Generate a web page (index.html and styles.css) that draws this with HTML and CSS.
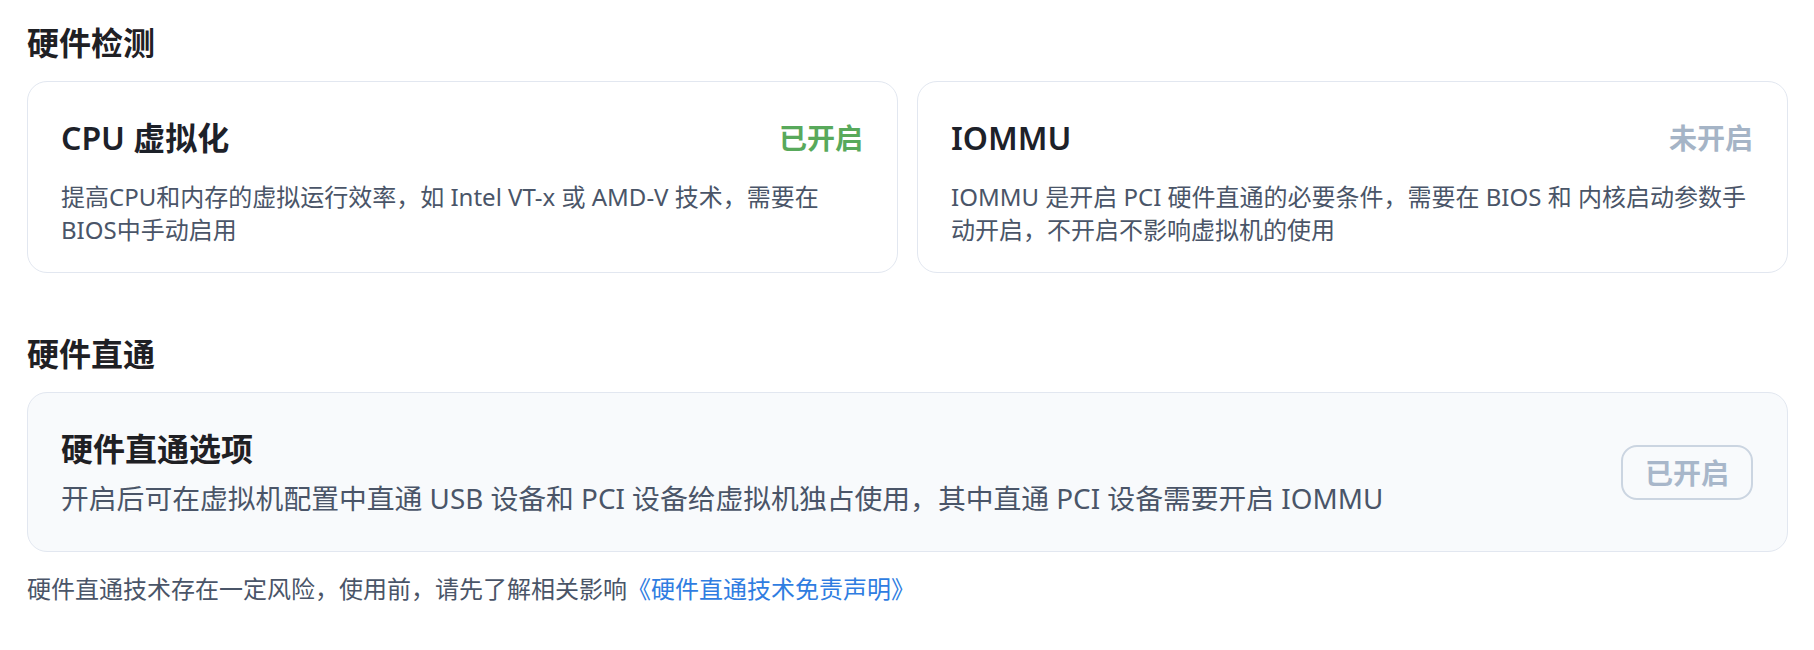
FILE: index.html
```html
<!DOCTYPE html>
<html lang="zh-CN">

<head>
    <meta charset="UTF-8">
    <meta name="viewport" content="width=device-width, initial-scale=1.0">
    <title>硬件</title>
    <link rel="stylesheet" href="styles.css">
</head>

<body>
    <section class="section">
        <h2 class="section-title">硬件检测</h2>
        <div class="check-grid">
            <div class="check-card">
                <div class="check-head">
                    <span class="check-name">CPU 虚拟化</span>
                    <span class="status status-on">已开启</span>
                </div>
                <p class="check-desc">提高CPU和内存的虚拟运行效率，如 Intel VT-x 或 AMD-V 技术，需要在BIOS中手动启用</p>
            </div>
            <div class="check-card">
                <div class="check-head">
                    <span class="check-name">IOMMU</span>
                    <span class="status status-off">未开启</span>
                </div>
                <p class="check-desc">IOMMU 是开启 PCI 硬件直通的必要条件，需要在 BIOS 和 内核启动参数手动开启，不开启不影响虚拟机的使用</p>
            </div>
        </div>
    </section>

    <section class="section section-pass">
        <h2 class="section-title">硬件直通</h2>
        <div class="option-card">
            <div class="option-text">
                <div class="option-name">硬件直通选项</div>
                <p class="option-desc">开启后可在虚拟机配置中直通 USB 设备和 PCI 设备给虚拟机独占使用，其中直通 PCI 设备需要开启 IOMMU</p>
            </div>
            <button class="option-button" disabled>已开启</button>
        </div>
        <p class="note">硬件直通技术存在一定风险，使用前，请先了解相关影响<a href="#" class="note-link">《硬件直通技术免责声明》</a></p>
    </section>
</body>

</html>
```

FILE: styles.css
```css
body {
    margin: 0;
    padding: 19px 26px 0 27px;
    font-family: "Noto Sans", "Noto Sans CJK SC", sans-serif;
    background-color: #ffffff;
    color: #1f2329;
}

.section-title {
    margin: 0 0 14px;
    font-size: 32px;
    line-height: 48px;
    font-weight: 700;
    color: #1f2024;
}

.section-pass {
    margin-top: 57px;
}

.check-grid {
    display: grid;
    grid-template-columns: 1fr 1fr;
    gap: 19px;
}

.check-card {
    border: 1px solid #e2e7f0;
    border-radius: 20px;
    padding: 32px 34px 26px 33px;
    background-color: #ffffff;
}

.check-head {
    display: flex;
    justify-content: space-between;
    align-items: center;
    margin-bottom: 18px;
}

.check-name {
    font-size: 32px;
    line-height: 48px;
    font-weight: 600;
    color: #1d2129;
}

.status {
    font-size: 28px;
    line-height: 48px;
    font-weight: 700;
}

.status-on {
    color: #58a95b;
}

.status-off {
    color: #a5b4c6;
}

.check-desc {
    margin: 0;
    font-size: 24px;
    line-height: 33px;
    color: #4a5568;
}

.option-card {
    display: flex;
    justify-content: space-between;
    align-items: center;
    border: 1px solid #e2e7f0;
    border-radius: 20px;
    padding: 32px 34px 32px 33px;
    background-color: #f8fafc;
}

.option-name {
    font-size: 32px;
    line-height: 48px;
    font-weight: 700;
    color: #1f2024;
}

.option-desc {
    margin: 4px 0 0;
    font-size: 27.8px;
    line-height: 42px;
    color: #4a5568;
}

.option-button {
    height: 55px;
    padding: 0 22px;
    border: 2px solid #cbd5e1;
    border-radius: 16px;
    background-color: transparent;
    font-family: inherit;
    font-size: 28px;
    font-weight: 700;
    color: #a8b7ca;
}

.note {
    margin: 19px 0 0;
    font-size: 24px;
    line-height: 36px;
    color: #4a5568;
}

.note-link {
    color: #2f7de1;
    text-decoration: none;
}
```
